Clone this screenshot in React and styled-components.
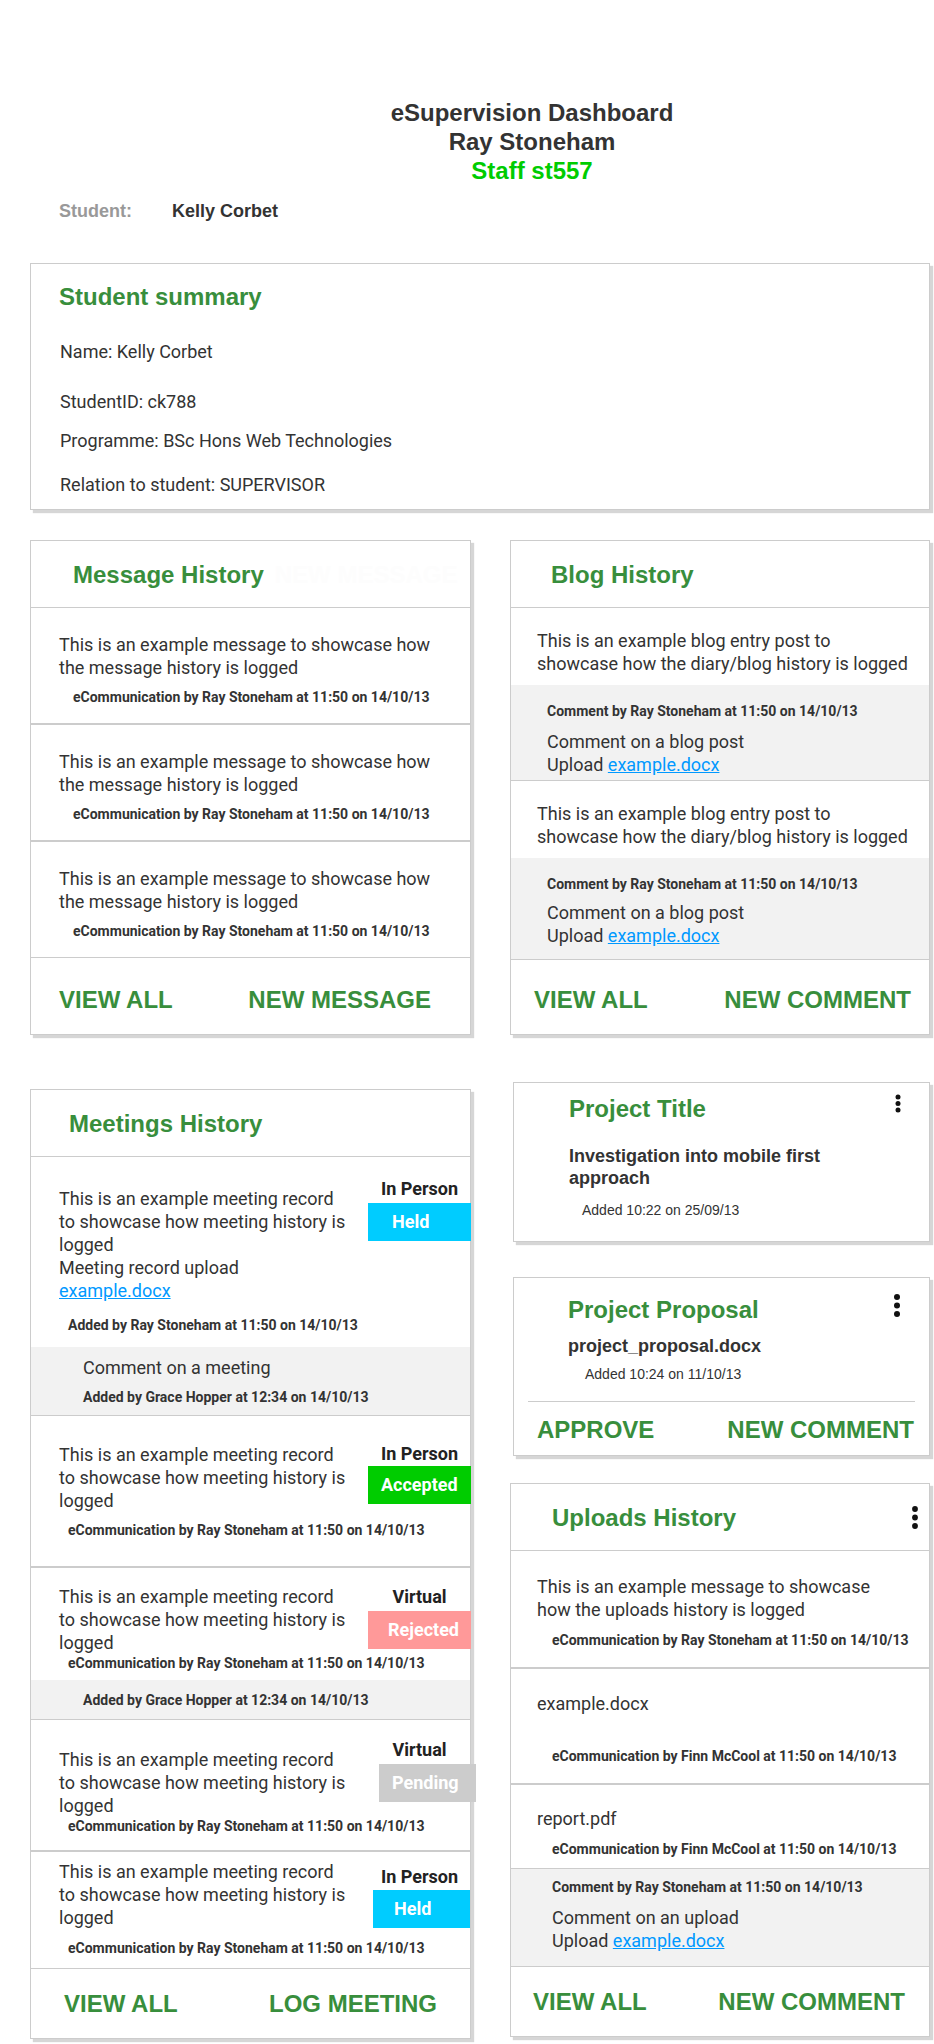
import styled, { createGlobalStyle } from "styled-components";

const GREEN = "#388e3c";
const LINK = "#0099ff";
const RULE = "#cccccc";

const GlobalStyle = createGlobalStyle`
  body {
    margin: 0;
    background: #fff;
    color: #333;
    font-family: Roboto, "Liberation Sans", Arial, sans-serif;
  }
`;

// 미팅 기록 데이터 (간격은 화면 기준으로 맞춤)
const meetings = [
  {
    mode: "In Person",
    status: "Held",
    color: "#00ccff",
    textTop: 30,
    sideTop: 21,
    badgeTop: 3,
    badgePad: 24,
    metaGap: 14,
    pb: 13,
    rule: 0,
    by: "Added by Ray Stoneham at 11:50 on 14/10/13",
    upload: true,
    note: { text: "Comment on a meeting", pt: 9, pb: 9 },
  },
  {
    mode: "In Person",
    status: "Accepted",
    color: "#00cc00",
    textTop: 27,
    sideTop: 27,
    badgeTop: 1,
    badgePad: 13,
    metaGap: 9,
    pb: 27,
    rule: 1,
  },
  {
    mode: "Virtual",
    status: "Rejected",
    color: "#ff9999",
    textTop: 17,
    sideTop: 18,
    badgeTop: 3,
    badgePad: 20,
    metaGap: 0,
    pb: 8,
    rule: 2,
    note: { pt: 11, pb: 10 },
  },
  {
    mode: "Virtual",
    status: "Pending",
    color: "#cccccc",
    textTop: 28,
    sideTop: 19,
    badgeTop: 3,
    badgePad: 13,
    badgeWidth: 97,
    shift: 11,
    metaGap: 0,
    pb: 15,
    rule: 1,
  },
  {
    mode: "In Person",
    status: "Held",
    color: "#00ccff",
    textTop: 8,
    sideTop: 14,
    badgeTop: 2,
    badgePad: 21,
    badgeWidth: 97,
    shift: 5,
    metaGap: 10,
    pb: 11,
    rule: 2,
  },
];

const blogEntries = [
  { rule: 0, gap: 10, pb: 4 },
  { rule: 1, gap: 8, pb: 12 },
];

const uploads = [
  {
    text: "This is an example message to showcase how the uploads history is logged",
    by: "Ray Stoneham",
    rule: 0,
    pt: 24,
    gap: 10,
    pb: 18,
  },
  { text: "example.docx", by: "Finn McCool", rule: 2, pt: 23, gap: 32, pb: 18 },
  { text: "report.pdf", by: "Finn McCool", rule: 2, pt: 22, gap: 10, pb: 10 },
];

function Kebab({ gap = 7, r = 2.6, top = 0 }) {
  const h = gap * 2 + 6;
  return (
    <KebabIcon width="6" height={h} viewBox={`0 0 6 ${h}`} $top={top}>
      {[0, 1, 2].map(i => (
        <circle key={i} cx="3" cy={3 + i * gap} r={r} />
      ))}
    </KebabIcon>
  );
}

export default function App() {
  return (
    <Page>
      <GlobalStyle />

      <Header>
        <div>eSupervision Dashboard</div>
        <div>Ray Stoneham</div>
        <HeaderAccent>Staff st557</HeaderAccent>
      </Header>

      <StudentRow>
        <StudentLabel>Student:</StudentLabel>
        <span>Kelly Corbet</span>
      </StudentRow>

      <SummaryCard>
        <CardTitle>Student summary</CardTitle>
        <SummaryLine $gap={30}>Name: Kelly Corbet</SummaryLine>
        <SummaryLine $gap={28}>StudentID: ck788</SummaryLine>
        <SummaryLine $gap={17}>Programme: BSc Hons Web Technologies</SummaryLine>
        <SummaryLine $gap={22}>Relation to student: SUPERVISOR</SummaryLine>
      </SummaryCard>

      <Grid $top={30}>
        {/* 메시지 기록 */}
        <Panel>
          <PanelHead $pl={42}>
            <CardTitle>Message History</CardTitle>
            <GhostAction>NEW MESSAGE</GhostAction>
          </PanelHead>
          {[0, 1, 2].map(i => (
            <MsgItem key={i} $rule={i === 0 ? 0 : 2}>
              <BodyText>
                This is an example message to showcase how the message history
                is logged
              </BodyText>
              <Meta $gap={9} $indent={14}>
                eCommunication by Ray Stoneham at 11:50 on 14/10/13
              </Meta>
            </MsgItem>
          ))}
          <Footer $pt={28} $pl={28} $pr={39}>
            <ActionButton>VIEW ALL</ActionButton>
            <ActionButton>NEW MESSAGE</ActionButton>
          </Footer>
        </Panel>

        {/* 블로그 기록 */}
        <Panel>
          <PanelHead $pl={40}>
            <CardTitle>Blog History</CardTitle>
          </PanelHead>
          {blogEntries.map((entry, i) => (
            <div key={i}>
              <BlogEntry $rule={entry.rule}>
                <BodyText>
                  This is an example blog entry post to showcase how the
                  diary/blog history is logged
                </BodyText>
              </BlogEntry>
              <BlogComment $pb={entry.pb}>
                <Meta>Comment by Ray Stoneham at 11:50 on 14/10/13</Meta>
                <BodyText $gap={entry.gap}>
                  Comment on a blog post
                  <br />
                  Upload <FileLink href="#">example.docx</FileLink>
                </BodyText>
              </BlogComment>
            </div>
          ))}
          <Footer $pt={26} $pl={23} $pr={18}>
            <ActionButton>VIEW ALL</ActionButton>
            <ActionButton>NEW COMMENT</ActionButton>
          </Footer>
        </Panel>
      </Grid>

      <Grid $top={47}>
        {/* 미팅 기록 */}
        <Panel $mt={7}>
          <PanelHead $pl={38}>
            <CardTitle>Meetings History</CardTitle>
          </PanelHead>
          {meetings.map((m, i) => (
            <MeetItem key={i} $rule={m.rule}>
              <MeetRow>
                <MeetText $top={m.textTop}>
                  This is an example meeting record to showcase how meeting
                  history is logged
                  {m.upload && (
                    <>
                      <br />
                      Meeting record upload{" "}
                      <FileLink href="#">example.docx</FileLink>
                    </>
                  )}
                </MeetText>
                <MeetSide $top={m.sideTop}>
                  <Mode>{m.mode}</Mode>
                  <Badge
                    $bg={m.color}
                    $top={m.badgeTop}
                    $pad={m.badgePad}
                    $width={m.badgeWidth || 103}
                    $shift={m.shift || 0}
                  >
                    {m.status}
                  </Badge>
                </MeetSide>
              </MeetRow>
              <Meta $gap={m.metaGap} $indent={37}>
                {m.by || "eCommunication by Ray Stoneham at 11:50 on 14/10/13"}
              </Meta>
              <Spacer $h={m.pb} />
              {m.note && (
                <GrayNote $pt={m.note.pt} $pb={m.note.pb}>
                  {m.note.text && <BodyText>{m.note.text}</BodyText>}
                  <Meta $gap={m.note.text ? 9 : 0}>
                    Added by Grace Hopper at 12:34 on 14/10/13
                  </Meta>
                </GrayNote>
              )}
            </MeetItem>
          ))}
          <Footer $pt={21} $pl={33} $pr={33}>
            <ActionButton>VIEW ALL</ActionButton>
            <ActionButton>LOG MEETING</ActionButton>
          </Footer>
        </Panel>

        <RightColumn>
          <ProjectCard $pt={12} $pb={22}>
            <PanelHead $flat $pl={55} $pr={28}>
              <CardTitle>Project Title</CardTitle>
              <Kebab gap={6.5} r={2.5} top={-1} />
            </PanelHead>
            <ProjectBody $pl={55}>
              <StrongText $gap={22}>
                Investigation into mobile first approach
              </StrongText>
              <AddedText $gap={13} $indent={13}>
                Added 10:22 on 25/09/13
              </AddedText>
            </ProjectBody>
          </ProjectCard>

          <ProjectCard $mt={35} $pt={18} $pb={11}>
            <PanelHead $flat $pl={54} $pr={29}>
              <CardTitle>Project Proposal</CardTitle>
              <Kebab gap={8.5} r={3} top={-2} />
            </PanelHead>
            <ProjectBody $pl={54}>
              <StrongText $gap={11}>project_proposal.docx</StrongText>
              <AddedText $gap={9} $indent={17}>
                Added 10:24 on 11/10/13
              </AddedText>
            </ProjectBody>
            <Divider />
            <Footer $flat $pt={14} $pb={0} $pl={23} $pr={15}>
              <ActionButton>APPROVE</ActionButton>
              <ActionButton>NEW COMMENT</ActionButton>
            </Footer>
          </ProjectCard>

          {/* 업로드 기록 */}
          <Panel $mt={27}>
            <PanelHead $pl={41} $pr={11}>
              <CardTitle>Uploads History</CardTitle>
              <Kebab gap={8.5} r={2.9} top={2} />
            </PanelHead>
            {uploads.map((u, i) => (
              <UploadItem key={i} $rule={u.rule} $pt={u.pt} $pb={u.pb}>
                <BodyText>{u.text}</BodyText>
                <Meta $gap={u.gap} $indent={15}>
                  eCommunication by {u.by} at 11:50 on 14/10/13
                </Meta>
              </UploadItem>
            ))}
            <UploadComment>
              <Meta>Comment by Ray Stoneham at 11:50 on 14/10/13</Meta>
              <BodyText $gap={10}>
                Comment on an upload
                <br />
                Upload <FileLink href="#">example.docx</FileLink>
              </BodyText>
            </UploadComment>
            <Footer $pt={21} $pl={22} $pr={24}>
              <ActionButton>VIEW ALL</ActionButton>
              <ActionButton>NEW COMMENT</ActionButton>
            </Footer>
          </Panel>
        </RightColumn>
      </Grid>
    </Page>
  );
}

const Page = styled.div`
  width: 934px;
  box-sizing: border-box;
  padding: 98px 0 4px 30px;
`;

const Header = styled.header`
  padding-left: 100px;
  text-align: center;
  font-family: "Liberation Sans", Arial, sans-serif;
  font-weight: bold;
  font-size: 24px;
  line-height: 29px;
  color: #333;
`;

const HeaderAccent = styled.div`
  color: #00cc00;
`;

const StudentRow = styled.div`
  display: flex;
  margin: 15px 0 0 29px;
  font-family: "Liberation Sans", Arial, sans-serif;
  font-weight: bold;
  font-size: 18px;
  line-height: 22px;
  color: #333;
`;

const StudentLabel = styled.span`
  width: 113px;
  color: #999;
`;

const Card = styled.section`
  box-sizing: border-box;
  background: #fff;
  border: 1px solid ${RULE};
  box-shadow: 3px 3px 1px #d6d6d6;
`;

const SummaryCard = styled(Card)`
  width: 900px;
  margin-top: 41px;
  padding: 19px 0 13px 28px;
`;

const CardTitle = styled.h2`
  margin: 0;
  font-family: "Liberation Sans", Arial, sans-serif;
  font-weight: bold;
  font-size: 24px;
  line-height: 28px;
  color: ${GREEN};
`;

const SummaryLine = styled.p`
  margin: ${p => p.$gap}px 0 0 1px;
  font-size: 18px;
  line-height: 22px;
`;

const Grid = styled.div`
  display: grid;
  grid-template-columns: 441px 420px;
  column-gap: 39px;
  align-items: start;
  margin-top: ${p => p.$top}px;
`;

const Panel = styled(Card)`
  display: flex;
  flex-direction: column;
  margin-top: ${p => p.$mt || 0}px;
`;

const PanelHead = styled.div`
  display: flex;
  align-items: flex-start;
  padding: ${p => (p.$flat ? 0 : 20)}px ${p => p.$pr || 0}px
    ${p => (p.$flat ? 0 : 18)}px ${p => p.$pl}px;
  border-bottom: ${p => (p.$flat ? "none" : `1px solid ${RULE}`)};
`;

const GhostAction = styled.span`
  margin-left: 11px;
  font-family: "Liberation Sans", Arial, sans-serif;
  font-weight: bold;
  font-size: 24px;
  line-height: 28px;
  color: #fdfdfd;
`;

const KebabIcon = styled.svg`
  flex: none;
  margin: ${p => p.$top}px 0 0 auto;
  fill: #111;
`;

const BodyText = styled.div`
  margin-top: ${p => p.$gap || 0}px;
  font-size: 18px;
  line-height: 23px;
  color: #333;
`;

const Meta = styled.div`
  margin-top: ${p => p.$gap || 0}px;
  padding-left: ${p => p.$indent || 0}px;
  font-weight: 700;
  font-size: 14px;
  line-height: 18px;
  color: #333;
  white-space: nowrap;
`;

const FileLink = styled.a`
  color: ${LINK};
  text-decoration: underline;
`;

const MsgItem = styled.div`
  padding: 25px 28px 17px;
  border-top: ${p => p.$rule}px solid ${RULE};
`;

const BlogEntry = styled.div`
  padding: 21px 20px 10px 26px;
  border-top: ${p => p.$rule}px solid ${RULE};
`;

const BlogComment = styled.div`
  padding: 17px 0 ${p => p.$pb}px 36px;
  background: #f2f2f2;
`;

const Footer = styled.div`
  display: flex;
  justify-content: space-between;
  margin-top: auto;
  padding: ${p => p.$pt}px ${p => p.$pr}px ${p => p.$pb ?? 20}px
    ${p => p.$pl}px;
  border-top: ${p => (p.$flat ? "none" : `1px solid ${RULE}`)};
`;

const ActionButton = styled.button`
  padding: 0;
  border: none;
  background: none;
  cursor: pointer;
  font-family: "Liberation Sans", Arial, sans-serif;
  font-weight: bold;
  font-size: 24px;
  line-height: 28px;
  color: ${GREEN};
`;

const MeetItem = styled.div`
  border-top: ${p => p.$rule}px solid ${RULE};
`;

const MeetRow = styled.div`
  display: flex;
  justify-content: space-between;
  align-items: flex-start;
`;

const MeetText = styled.div`
  width: 290px;
  padding: ${p => p.$top}px 0 0 28px;
  font-size: 18px;
  line-height: 23px;
  color: #333;
`;

const MeetSide = styled.div`
  display: flex;
  flex-direction: column;
  align-items: center;
  width: 103px;
  margin-right: -1px;
  padding-top: ${p => p.$top}px;
`;

const Mode = styled.div`
  font-weight: 700;
  font-size: 18px;
  line-height: 22px;
  color: #222;
`;

const Badge = styled.div`
  align-self: flex-start;
  box-sizing: border-box;
  width: ${p => p.$width}px;
  height: 38px;
  margin: ${p => p.$top}px 0 0 ${p => p.$shift}px;
  padding-left: ${p => p.$pad}px;
  background: ${p => p.$bg};
  color: #fff;
  font-weight: 700;
  font-size: 18px;
  line-height: 38px;
`;

const Spacer = styled.div`
  height: ${p => p.$h}px;
`;

const GrayNote = styled.div`
  padding: ${p => p.$pt}px 0 ${p => p.$pb}px 52px;
  background: #f2f2f2;
`;

const RightColumn = styled.div`
  display: flex;
  flex-direction: column;
`;

const ProjectCard = styled(Card)`
  width: 417px;
  margin: ${p => p.$mt || 0}px 0 0 3px;
  padding: ${p => p.$pt}px 0 ${p => p.$pb}px;
`;

const ProjectBody = styled.div`
  padding-left: ${p => p.$pl}px;
`;

const StrongText = styled.div`
  max-width: 300px;
  margin-top: ${p => p.$gap}px;
  font-family: "Liberation Sans", Arial, sans-serif;
  font-weight: bold;
  font-size: 18px;
  line-height: 22px;
  color: #333;
`;

const AddedText = styled.div`
  margin-top: ${p => p.$gap}px;
  padding-left: ${p => p.$indent}px;
  font-family: "Liberation Sans", Arial, sans-serif;
  font-size: 14px;
  line-height: 17px;
  color: #333;
`;

const Divider = styled.hr`
  margin: 18px 14px 0;
  border: none;
  border-top: 1px solid ${RULE};
`;

const UploadItem = styled.div`
  padding: ${p => p.$pt}px 50px ${p => p.$pb}px 26px;
  border-top: ${p => p.$rule}px solid ${RULE};
`;

const UploadComment = styled.div`
  padding: 9px 0 14px 41px;
  background: #f2f2f2;
  border-top: 1px solid ${RULE};
`;
